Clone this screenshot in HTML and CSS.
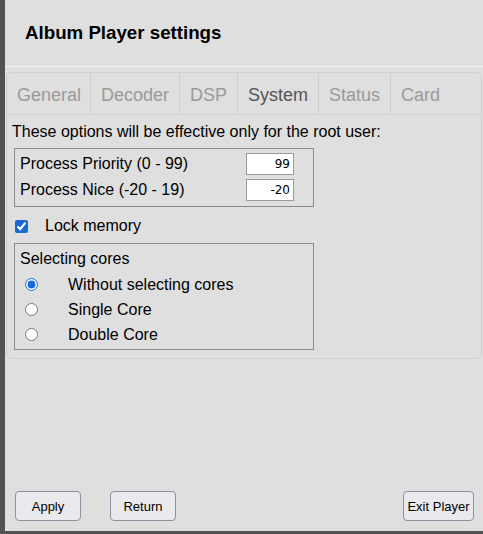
FILE: index.html
```html
<!DOCTYPE html>
<html>
<head>
<meta charset="utf-8">
<link rel="stylesheet" href="styles.css">
</head>
<body>
<div class="frame">
  <header class="header"><h1 class="title">Album Player settings</h1></header>
  <div class="sep"></div>
  <section class="panel">
    <nav class="tabs">
      <span class="tab">General</span>
      <span class="tab">Decoder</span>
      <span class="tab">DSP</span>
      <span class="tab active">System</span>
      <span class="tab">Status</span>
      <span class="tab last">Card</span>
    </nav>
    <div class="content">
      <p class="note">These options will be effective only for the root user:</p>
      <div class="box prio">
        <div class="row"><span>Process Priority (0 - 99)</span><input class="num" type="text" value="99"></div>
        <div class="row"><span>Process Nice (-20 - 19)</span><input class="num" type="text" value="-20"></div>
      </div>
      <label class="check"><input type="checkbox" checked><span>Lock memory</span></label>
      <div class="box cores">
        <div class="legend">Selecting cores</div>
        <label class="radio"><input type="radio" name="c" checked><span>Without selecting cores</span></label>
        <label class="radio"><input type="radio" name="c"><span>Single Core</span></label>
        <label class="radio"><input type="radio" name="c"><span>Double Core</span></label>
      </div>
    </div>
  </section>
  <div class="spacer"></div>
  <footer class="buttons">
    <button class="btn">Apply</button>
    <button class="btn ret">Return</button>
    <button class="btn exit">Exit Player</button>
  </footer>
</div>
</body>
</html>
```

FILE: styles.css
```css
* { box-sizing: border-box; }
html, body { margin: 0; padding: 0; }
body {
  font-family: "Liberation Sans", Arial, sans-serif;
  font-size: 16px;
  color: #000;
  background: #dfdfdf;
}
.frame {
  width: 483px;
  height: 534px;
  background: #dfdfdf;
  border-left: 5px solid #525252;
  border-bottom: 3px solid #525252;
  display: flex;
  flex-direction: column;
}
.header {
  height: 66px;
  display: flex;
  align-items: center;
  padding-left: 20px;
  padding-bottom: 1px;
}
.title {
  margin: 0;
  font-size: 18.72px;
  font-weight: bold;
  color: #000;
}
.sep {
  height: 1px;
  background: #f2f2f2;
}
.panel {
  margin: 5px 1px 0 1px;
  border: 1px solid #cfcfcf;
  border-radius: 6px;
}
.tabs {
  display: flex;
  height: 42px;
  border-bottom: 1px solid #cfcfcf;
}
.tab {
  display: flex;
  align-items: center;
  padding: 3px 10px 0 10px;
  font-size: 18px;
  color: #9a9a9a;
  border-right: 1px solid #cfcfcf;
}
.tab:first-child { width: 84px; }
.tab:nth-child(2) { width: 89px; }
.tab:nth-child(3) { width: 58px; }
.tab:nth-child(4) { width: 81px; }
.tab:nth-child(5) { width: 72px; }
.tab.active { color: #555; }
.tab.last { border-right: none; }
.content {
  padding: 7px 5px 8px 5px;
}
.note {
  margin: 0;
  line-height: 20px;
  height: 21px;
}
.box {
  width: 300px;
  margin-left: 2px;
  border: 1px solid #8a8a8a;
}
.prio {
  margin-top: 5px;
  padding: 2px 19px 3px 5px;
}
.row {
  height: 26px;
  display: flex;
  align-items: center;
  justify-content: space-between;
}
.num {
  width: 48px;
  height: 22px;
  margin: 0;
  border: 1px solid #9a9a9a;
  background: #fff;
  text-align: right;
  font-family: "DejaVu Sans", sans-serif;
  font-size: 12px;
  padding: 0 3px;
  color: #000;
}
.check {
  display: flex;
  align-items: center;
  height: 26px;
  margin-top: 6px;
}
.check input {
  width: 13px;
  height: 13px;
  margin: 0 17px 0 3px;
  accent-color: #1a6ad6;
}
.cores {
  margin-top: 4px;
  padding: 2px 5px 2px 5px;
}
.legend {
  height: 26px;
  line-height: 26px;
}
.radio {
  display: flex;
  align-items: center;
  height: 25px;
}
.radio input {
  width: 13px;
  height: 13px;
  margin: 0 30px 0 5px;
  accent-color: #1a6ad6;
}
.spacer { flex: 1; }
.buttons {
  display: flex;
  align-items: center;
  padding: 0 9px 10px 10px;
}
.btn {
  height: 30px;
  width: 66px;
  margin: 0;
  border: 1px solid #8f8f9d;
  border-radius: 4px;
  background: #e9e9ee;
  font-family: "Liberation Sans", Arial, sans-serif;
  font-size: 13px;
  color: #000;
  padding: 0;
}
.ret { margin-left: 29px; }
.exit { margin-left: auto; width: 71px; }
```
